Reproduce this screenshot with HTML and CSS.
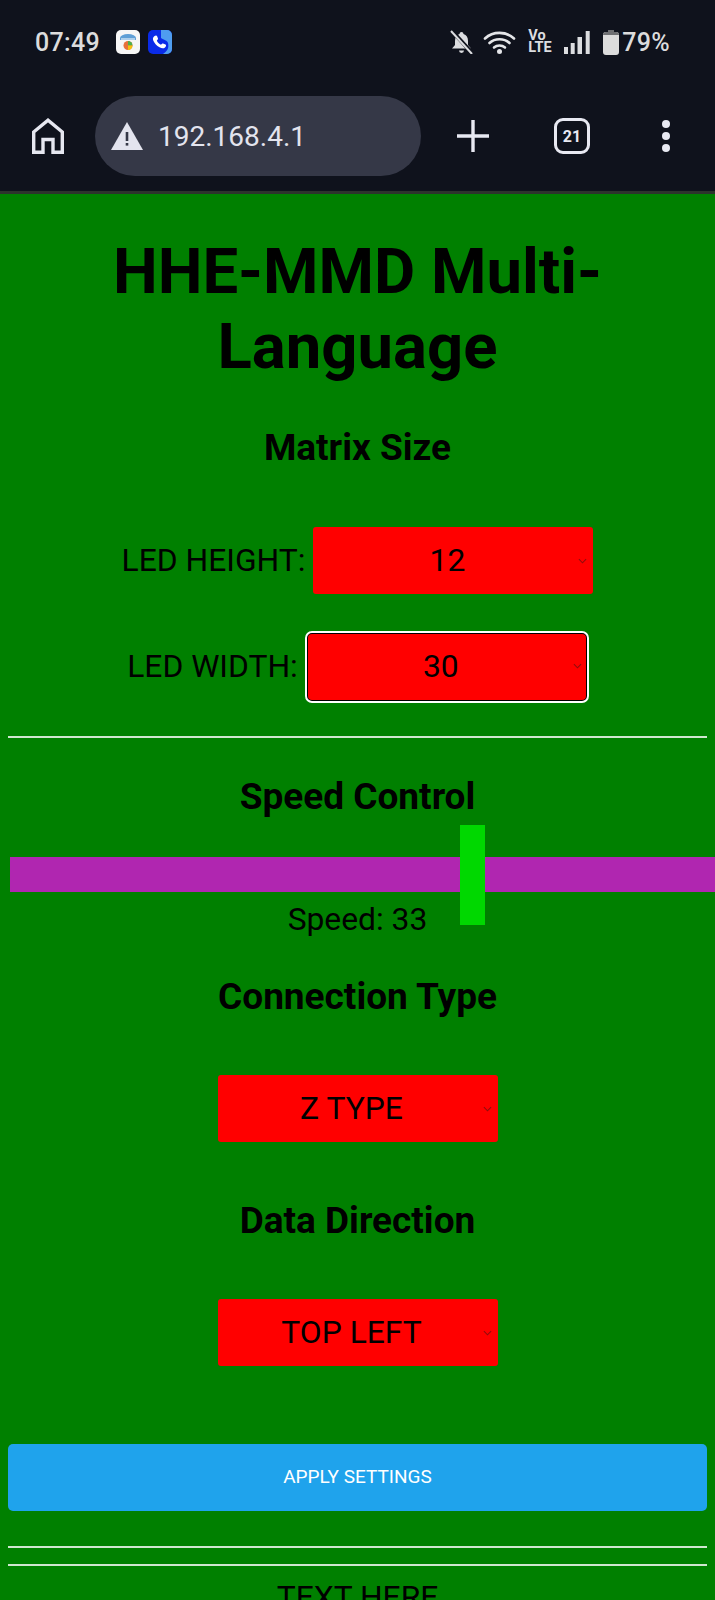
FILE: index.html
```html
<!DOCTYPE html>
<html lang="en">
<head>
<meta charset="utf-8">
<title>HHE-MMD Multi-Language</title>
<link rel="stylesheet" href="styles.css">
</head>
<body>
<header class="chrome">
  <div class="status">
    <div class="status-left">
      <span class="time">07:49</span>
      <svg class="app-icon" viewBox="0 0 24 24"><rect width="24" height="24" rx="5" fill="#f6f6f6"/><path d="M4 8a8 4 0 0 1 16 0v2H4z" fill="#5f9fd6"/><path d="M5 9h14" stroke="#fff" stroke-width="1"/><circle cx="12" cy="15.500" r="4.500" fill="#e8703a"/><path d="M12 11a4.500 4.500 0 0 1 4.500 4.500H12z" fill="#4caf50"/><path d="M12 15.500h4.500a4.500 4.500 0 0 1-4.500 4.500z" fill="#f4c20d"/></svg>
      <svg class="app-icon" viewBox="0 0 24 24"><rect width="24" height="24" rx="5" fill="#0a2be8"/><path d="M13 0h6a5 5 0 0 1 5 5v14a5 5 0 0 1-5 5h-4c5-3 6-7 5-11-1-3-4-3-7-5z" fill="#4f9df0"/><path d="M6 6.500c1-1 2.500-1.500 3-.5l1 2.500c.2.700-.5 1.300-1.200 2 .8 2 2.200 3.400 4.200 4.200.7-.7 1.300-1.400 2-1.200l2.500 1c1 .5.500 2-.5 3-1.500 1.300-3.500 1-5.500-.2-3-1.700-4.800-3.700-6-6.300-.8-1.800-.8-3.300.5-4.500z" fill="#fff"/></svg>
    </div>
    <div class="status-right">
      <svg class="ic-bell" viewBox="0 0 23 24"><path d="M11.500 2a2 2 0 0 1 2 2c3 1 4.500 3.500 4.500 7v4l3 3.500H2l3-3.500v-4c0-3.500 1.500-6 4.500-7a2 2 0 0 1 2-2z" fill="#dcdde0"/><path d="M9 20.500h5a2.500 2.500 0 0 1-5 0z" fill="#dcdde0"/><path d="M2 1l21 23" stroke="#0f121c" stroke-width="4"/><path d="M1 1l21 23" stroke="#dcdde0" stroke-width="2"/></svg>
      <svg class="ic-wifi" viewBox="0 0 33 24"><g fill="none" stroke="#e4e5e8" stroke-width="2.600" stroke-linecap="round"><path d="M2 8.500C10 1 23 1 31 8.500"/><path d="M6.500 13c5.500-5 14.500-5 20 0"/><path d="M11 17.500c3-2.600 8-2.600 11 0"/></g><circle cx="16.500" cy="21.500" r="2.500" fill="#e4e5e8"/></svg>
      <span class="volte">Vo<br>LTE</span>
      <svg class="ic-signal" viewBox="0 0 26 24"><g fill="#dcdde0"><rect x="0" y="17" width="4" height="7"/><rect x="6.700" y="13" width="4" height="11"/><rect x="13.500" y="7" width="4.500" height="17"/><rect x="21.700" y="1" width="4" height="23"/></g></svg>
      <svg class="ic-battery" viewBox="0 0 16 25"><path d="M5 0h6v2h2a3 3 0 0 1 3 3v17a3 3 0 0 1-3 3H3a3 3 0 0 1-3-3V5a3 3 0 0 1 3-3h2z" fill="#dcdcdc"/><path d="M5 0h6v2h2a3 3 0 0 1 3 3H0a3 3 0 0 1 3-3h2z" fill="#6e6f72"/></svg>
      <span class="battery-pct">79%</span>
    </div>
  </div>
  <div class="toolbar">
    <svg class="ic-home" viewBox="0 0 32 36"><path d="M1.700 34.300V14L16 2.200 30.300 14v20.300H21V21.500H11v12.800z" fill="none" stroke="#e6e7f0" stroke-width="3.400"/></svg>
    <div class="omnibox">
      <svg class="ic-warn" viewBox="0 0 32 28"><path d="M16 0l16 28H0z" fill="#e3e4ee"/><rect x="14.700" y="10" width="2.600" height="9" fill="#353847"/><rect x="14.700" y="21" width="2.600" height="2.600" fill="#353847"/></svg>
      <span class="url">192.168.4.1</span>
    </div>
    <svg class="ic-plus" viewBox="0 0 32 32"><path d="M16 0v32M0 16h32" stroke="#e8e9f2" stroke-width="3.400"/></svg>
    <div class="tabs">21</div>
    <div class="dots"><i></i><i></i><i></i></div>
  </div>
</header>
<main class="page">
  <h1 class="title">HHE-MMD Multi-Language</h1>
  <h2 class="heading heading-matrix">Matrix Size</h2>
  <div class="field field-height">
    <label class="field-label" for="h">LED HEIGHT:</label>
    <span class="select-wrap">
      <select id="h" class="select"><option>12</option></select>
      <svg class="chevron" viewBox="0 0 10 6"><path d="M1 1l4 4 4-4" fill="none" stroke="#900c0c" stroke-width="1.200"/></svg>
    </span>
  </div>
  <div class="field field-width">
    <label class="field-label" for="w">LED WIDTH:</label>
    <span class="select-wrap">
      <select id="w" class="select select-focus"><option>30</option></select>
      <svg class="chevron" viewBox="0 0 10 6"><path d="M1 1l4 4 4-4" fill="none" stroke="#900c0c" stroke-width="1.200"/></svg>
    </span>
  </div>
  <hr class="rule rule-first">
  <h2 class="heading heading-speed">Speed Control</h2>
  <input class="slider" type="range" min="0" max="100" value="66" aria-label="Speed">
  <p class="speed">Speed: 33</p>
  <h2 class="heading heading-conn">Connection Type</h2>
  <div class="field field-conn">
    <span class="select-wrap">
      <select class="select" aria-label="Connection Type"><option>Z TYPE</option></select>
      <svg class="chevron" viewBox="0 0 10 6"><path d="M1 1l4 4 4-4" fill="none" stroke="#900c0c" stroke-width="1.200"/></svg>
    </span>
  </div>
  <h2 class="heading heading-data">Data Direction</h2>
  <div class="field field-data">
    <span class="select-wrap">
      <select class="select" aria-label="Data Direction"><option>TOP LEFT</option></select>
      <svg class="chevron" viewBox="0 0 10 6"><path d="M1 1l4 4 4-4" fill="none" stroke="#900c0c" stroke-width="1.200"/></svg>
    </span>
  </div>
  <button class="apply" type="button">APPLY SETTINGS</button>
  <hr class="rule rule-a">
  <hr class="rule rule-b">
  <p class="text-here">TEXT HERE</p>
</main>
</body>
</html>
```
FILE: styles.css
```css
html, body { margin: 0; padding: 0; overflow: hidden; height: 1600px; }
body { background: #008000; font-family: Roboto, "Liberation Sans", sans-serif; color: #000; }

.chrome { height: 191px; background: #0f121c; border-bottom: 3px solid #2c332c; box-sizing: content-box; display: flex; flex-direction: column; }
.status { height: 96px; box-sizing: border-box; padding: 29px 45px 0 35px; display: flex; justify-content: space-between; align-items: flex-start; }
.status-left { display: flex; align-items: center; gap: 8px; height: 26px; }
.time { font-size: 25px; font-weight: 500; color: #dcdcdc; margin-right: 8px; letter-spacing: .3px; }
.app-icon { width: 24px; height: 24px; }
.status-right { display: flex; align-items: center; height: 26px; }
.ic-bell { width: 23px; height: 24px; margin-right: 10px; }
.ic-wifi { width: 33px; height: 24px; margin-right: 12px; }
.volte { display: block; width: 22px; font-size: 14.500px; line-height: 12px; font-weight: 700; color: #dcdde0; margin-right: 14px; }
.ic-signal { width: 26px; height: 24px; margin-right: 13px; }
.ic-battery { width: 16px; height: 25px; margin-right: 3px; }
.battery-pct { font-size: 25px; font-weight: 500; color: #dcdcdc; letter-spacing: .3px; }

.toolbar { display: flex; align-items: center; height: 80px; padding-left: 32px; }
.ic-home { width: 32px; height: 36px; margin-right: 31px; }
.omnibox { width: 326px; height: 80px; border-radius: 40px; background: #353847; display: flex; align-items: center; padding-left: 16px; box-sizing: border-box; margin-right: 36px; }
.ic-warn { width: 32px; height: 28px; margin-right: 15px; }
.url { font-size: 28px; color: #e3e4ee; }
.ic-plus { width: 32px; height: 32px; margin-right: 65px; }
.tabs { width: 36px; height: 36px; box-sizing: border-box; border: 3.500px solid #e8e9f2; border-radius: 9px; color: #e8e9f2; font-size: 16px; font-weight: 700; display: flex; align-items: center; justify-content: center; margin-right: 72px; }
.dots { display: flex; flex-direction: column; gap: 4px; }
.dots i { display: block; width: 8px; height: 8px; border-radius: 50%; background: #e8e9f2; }

.page { padding: 0 8px; text-align: center; }
.title { font-size: 63.400px; line-height: 75px; font-weight: 700; margin: 40px 0 0; padding: 0 60px; }
.heading { font-size: 37px; line-height: 42px; font-weight: 700; margin: 0; }
.heading-matrix { margin-top: 43px; }
.heading-speed { margin-top: 38px; }
.heading-conn { margin-top: 39px; }
.heading-data { margin-top: 58px; }

.field { display: flex; justify-content: center; align-items: center; gap: 8px; font-size: 31.800px; }
.field-height { margin-top: 58px; }
.field-width { margin-top: 38px; }
.field-conn { margin-top: 57px; }
.field-data { margin-top: 57px; }
.field-label { line-height: 36px; margin-bottom: 2px; }
.select-wrap { position: relative; display: block; }
.select { display: block; width: 280px; height: 67px; appearance: none; -webkit-appearance: none; background: #ff0000; border: 0; border-radius: 3px; color: #000; font-family: Roboto, sans-serif; font-size: 31.800px; text-align: center; text-align-last: center; padding: 0 20px 2px 8px; margin: 0; }
.select-focus { box-sizing: border-box; width: 282px; height: 70px; border: 2px solid #000; outline: 2px solid #fff; outline-offset: -1px; border-radius: 6px; }
.chevron { position: absolute; right: 6px; top: 31px; width: 9px; height: 6px; }

.rule { border: 0; border-top: 2px solid #cfe6cf; margin: 0; }
.rule-first { margin-top: 34px; }
.rule-a { margin-top: 35px; }
.rule-b { margin-top: 16px; }

.slider { display: block; appearance: none; -webkit-appearance: none; width: calc(100% + 8px); height: 35px; margin: 39px 0 0 2px; padding: 0; background: #b026b0; border: 0; outline: 0; }
.slider::-webkit-slider-thumb { -webkit-appearance: none; appearance: none; width: 25px; height: 100px; background: #00d800; border: 0; border-radius: 0; }

.speed { font-size: 31.800px; line-height: 36px; margin: 9px 0 0; }
.apply { display: block; width: 100%; height: 67px; margin-top: 78px; padding: 0 0 3px; background: #1fa3ec; color: #fff; border: 0; border-radius: 5px; font-family: Roboto, sans-serif; font-size: 19px; }
.text-here { font-size: 31.800px; line-height: 36px; margin: 13px 0 0; }
```
